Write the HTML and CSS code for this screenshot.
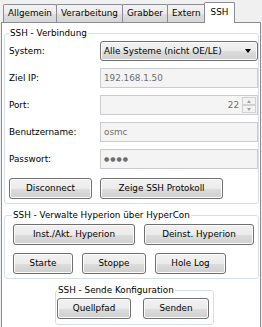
FILE: index.html
```html
<!DOCTYPE html>
<html lang="de">
    <head>
        <meta charset="UTF-8" />
        <title>SSH</title>
        <link rel="stylesheet" href="styles.css">
    </head>
    <body>
        <div class="window">
            <div class="tabs">
                <div class="tab">Allgemein</div>
                <div class="tab">Verarbeitung</div>
                <div class="tab">Grabber</div>
                <div class="tab">Extern</div>
                <div class="tab active">SSH</div>
            </div>
            <div class="panel">
                <fieldset class="group group-conn">
                    <legend>SSH - Verbindung</legend>
                    <div class="form">
                        <label>System:</label>
                        <div class="combo">
                            <span>Alle Systeme (nicht OE/LE)</span>
                            <span class="arrow"></span>
                        </div>
                        <label>Ziel IP:</label>
                        <div class="textbox">192.168.1.50</div>
                        <label>Port:</label>
                        <div class="textbox spin">
                            <span class="value">22</span>
                            <span class="spinner">
                                <span class="up"></span>
                                <span class="down"></span>
                            </span>
                        </div>
                        <label>Benutzername:</label>
                        <div class="textbox">osmc</div>
                        <label>Passwort:</label>
                        <div class="textbox dots">●●●●</div>
                    </div>
                    <div class="btn-row conn-buttons">
                        <div class="btn w-disc">Disconnect</div>
                        <div class="btn w-log">Zeige SSH Protokoll</div>
                    </div>
                </fieldset>

                <fieldset class="group group-manage">
                    <legend>SSH - Verwalte Hyperion über HyperCon</legend>
                    <div class="btn-row row-a">
                        <div class="btn w-inst">Inst./Akt. Hyperion</div>
                        <div class="btn w-deinst">Deinst. Hyperion</div>
                    </div>
                    <div class="btn-row row-b">
                        <div class="btn w-start">Starte</div>
                        <div class="btn w-stop">Stoppe</div>
                        <div class="btn w-hole">Hole Log</div>
                    </div>
                </fieldset>

                <fieldset class="group group-send">
                    <legend>SSH - Sende Konfiguration</legend>
                    <div class="btn-row send-buttons">
                        <div class="btn w-quell">Quellpfad</div>
                        <div class="btn w-send">Senden</div>
                    </div>
                </fieldset>
            </div>
        </div>
    </body>
</html>
```

FILE: styles.css
```css
* {
    box-sizing: border-box;
}
body {
    margin: 0;
    width: 262px;
    height: 327px;
    overflow: hidden;
    background: #f0f0f0;
    font-family: "DejaVu Sans", Tahoma, sans-serif;
    font-size: 8.8px;
    color: #000;
}
.window {
    padding: 0 1px 0 1px;
}

/* tabs */
.tabs {
    display: flex;
    align-items: flex-end;
    height: 22px;
    padding-left: 2px;
}
.tab {
    height: 18px;
    line-height: 17px;
    padding: 0 4px;
    margin-right: -1px;
    border: 1px solid #898c95;
    border-bottom: 0;
    border-radius: 2px 2px 0 0;
    background: linear-gradient(#f3f3f3, #ebebeb 50%, #dddddd 51%, #d6d6d6);
    white-space: nowrap;
}
.tab.active {
    position: relative;
    z-index: 1;
    height: 21px;
    line-height: 19px;
    margin: 0 -2px -1px -1px;
    padding: 0 6px;
    background: #fff;
}

/* panel */
.panel {
    height: 306px;
    border: 1px solid #898c95;
    background: #fff;
    padding-top: 1px;
}

.group {
    margin: 3px 1px 0 2px;
    padding: 2px 0 4px 4px;
    border: 1px solid #d5dfe5;
    border-radius: 3px;
    min-width: 0;
}
.group legend {
    padding: 0 1px;
    line-height: 12px;
}

.form {
    display: grid;
    grid-template-columns: 91px 1fr;
    grid-auto-rows: 20px;
    row-gap: 7px;
    align-items: center;
}
.form label {
    line-height: 20px;
}

.combo {
    display: flex;
    align-items: center;
    height: 20px;
    padding: 0 6px 0 3px;
    border: 1px solid #707070;
    border-radius: 3px;
    background: linear-gradient(#f2f2f2, #ebebeb 50%, #dddddd 51%, #cfcfcf);
    box-shadow: inset 0 0 0 1px #fbfbfb;
}
.combo .arrow {
    margin-left: auto;
    width: 0;
    height: 0;
    border-left: 3.5px solid transparent;
    border-right: 3.5px solid transparent;
    border-top: 4px solid #000;
}

.textbox {
    height: 20px;
    line-height: 18px;
    padding: 0 3px;
    border: 1px solid #c9cbcf;
    background: #f4f4f4;
    color: #6d6d6d;
}
.textbox.spin {
    display: flex;
    padding-right: 1px;
}
.spin .value {
    margin-left: auto;
    padding-right: 3px;
}
.spinner {
    display: flex;
    flex-direction: column;
    width: 14px;
    padding: 1px 0;
}
.spinner span {
    flex: 1;
    display: flex;
    align-items: center;
    justify-content: center;
    border: 1px solid #d2d2d2;
    background: #f2f2f2;
}
.spinner .up::after,
.spinner .down::after {
    content: "";
    border-left: 2.5px solid transparent;
    border-right: 2.5px solid transparent;
}
.spinner .up::after {
    border-bottom: 3px solid #a0a0a0;
}
.spinner .down::after {
    border-top: 3px solid #a0a0a0;
}
.textbox.dots {
    font-size: 6px;
    letter-spacing: 1px;
    line-height: 18px;
    color: #6d6d6d;
}

/* buttons */
.btn-row {
    display: flex;
}
.btn {
    height: 21px;
    line-height: 19px;
    text-align: center;
    border: 1px solid #707070;
    border-radius: 3px;
    background: linear-gradient(#f2f2f2, #ebebeb 50%, #dddddd 51%, #cfcfcf);
    box-shadow: inset 0 0 0 1px #fcfcfc;
    white-space: nowrap;
}

.conn-buttons {
    margin-top: 9px;
    gap: 8px;
}
.w-disc { width: 83px; }
.w-log { width: 123px; }

.group-manage {
    margin-top: 5px;
    padding: 3px 0 4px 8px;
}
.group-manage legend {
    margin-left: -1px;
}
.row-a {
    gap: 9px;
}
.row-b {
    margin-top: 8px;
    gap: 9px;
}
.w-inst { width: 122px; }
.w-deinst { width: 110px; }
.w-start { width: 60px; }
.w-stop { width: 64px; }
.w-hole { width: 71px; }

.group-send {
    width: 159px;
    margin: 5px 0 0 53px;
    padding: 2px 0 5px 1px;
}
.send-buttons {
    gap: 12px;
}
.w-quell { width: 74px; }
.w-send { width: 66px; }
```
